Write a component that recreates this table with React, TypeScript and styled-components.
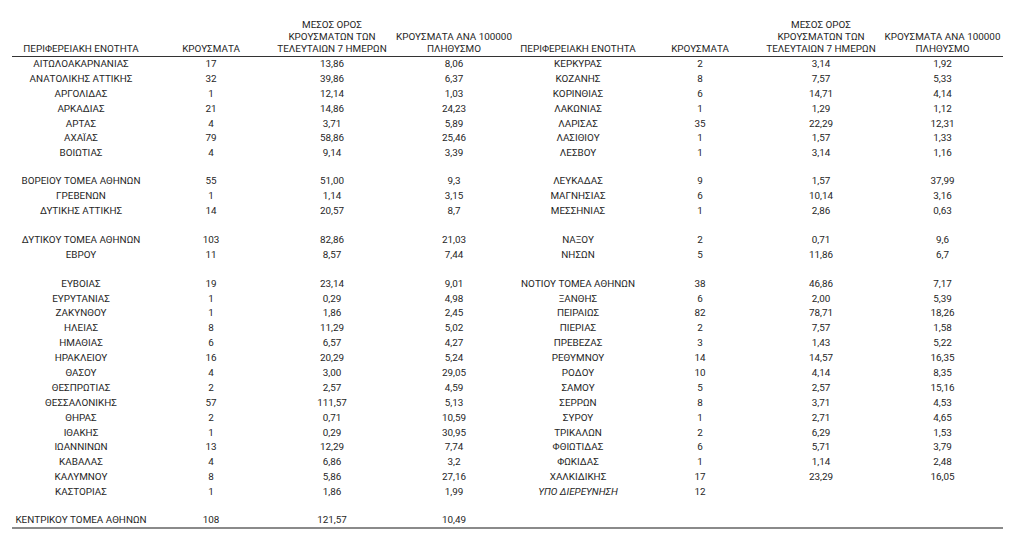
import React from "react";
import styled, { createGlobalStyle } from "styled-components";

const GlobalStyle = createGlobalStyle`
  html, body {
    margin: 0;
    padding: 0;
    background: #ffffff;
  }
  body {
    font-family: Roboto, "Noto Sans", "DejaVu Sans", sans-serif;
    color: #262626;
  }
`;

const Page = styled.div`
  width: 1024px;
  height: 534px;
  padding: 19px 0 0 12px;
  box-sizing: border-box;
  overflow: hidden;
`;

const Sheet = styled.table`
  width: 991px;
  table-layout: fixed;
  border-collapse: collapse;
  border-spacing: 0;
  font-size: 9.9px;
  color: #262626;
`;

const HeadCell = styled.th`
  font-weight: 400;
  text-align: center;
  vertical-align: bottom;
  line-height: 12px;
  padding: 0 0 1px 0;
  white-space: nowrap;
  border-bottom: 1.5px solid #333333;
`;

const Row = styled.tr<{ $blank?: "normal" | "short"; $last?: boolean }>`
  height: ${(p) =>
    p.$blank === "short" ? "13px" : p.$blank === "normal" ? "14px" : "14.9px"};
  ${(p) => (p.$last ? "border-bottom: 2.5px solid #8a8a8a;" : "")}
`;

const Cell = styled.td<{ $italic?: boolean }>`
  text-align: center;
  vertical-align: middle;
  padding: 0;
  line-height: 14px;
  white-space: nowrap;
  font-style: ${(p) => (p.$italic ? "italic" : "normal")};
`;

type Entry = [string, string, string, string];
type Line = { left?: Entry; right?: Entry; rightItalic?: boolean } | "gap" | "gapShort";

const lines: Line[] = [
  { left: ["ΑΙΤΩΛΟΑΚΑΡΝΑΝΙΑΣ", "17", "13,86", "8,06"], right: ["ΚΕΡΚΥΡΑΣ", "2", "3,14", "1,92"] },
  { left: ["ΑΝΑΤΟΛΙΚΗΣ ΑΤΤΙΚΗΣ", "32", "39,86", "6,37"], right: ["ΚΟΖΑΝΗΣ", "8", "7,57", "5,33"] },
  { left: ["ΑΡΓΟΛΙΔΑΣ", "1", "12,14", "1,03"], right: ["ΚΟΡΙΝΘΙΑΣ", "6", "14,71", "4,14"] },
  { left: ["ΑΡΚΑΔΙΑΣ", "21", "14,86", "24,23"], right: ["ΛΑΚΩΝΙΑΣ", "1", "1,29", "1,12"] },
  { left: ["ΑΡΤΑΣ", "4", "3,71", "5,89"], right: ["ΛΑΡΙΣΑΣ", "35", "22,29", "12,31"] },
  { left: ["ΑΧΑΪΑΣ", "79", "58,86", "25,46"], right: ["ΛΑΣΙΘΙΟΥ", "1", "1,57", "1,33"] },
  { left: ["ΒΟΙΩΤΙΑΣ", "4", "9,14", "3,39"], right: ["ΛΕΣΒΟΥ", "1", "3,14", "1,16"] },
  "gapShort",
  { left: ["ΒΟΡΕΙΟΥ ΤΟΜΕΑ ΑΘΗΝΩΝ", "55", "51,00", "9,3"], right: ["ΛΕΥΚΑΔΑΣ", "9", "1,57", "37,99"] },
  { left: ["ΓΡΕΒΕΝΩΝ", "1", "1,14", "3,15"], right: ["ΜΑΓΝΗΣΙΑΣ", "6", "10,14", "3,16"] },
  { left: ["ΔΥΤΙΚΗΣ ΑΤΤΙΚΗΣ", "14", "20,57", "8,7"], right: ["ΜΕΣΣΗΝΙΑΣ", "1", "2,86", "0,63"] },
  "gap",
  { left: ["ΔΥΤΙΚΟΥ ΤΟΜΕΑ ΑΘΗΝΩΝ", "103", "82,86", "21,03"], right: ["ΝΑΞΟΥ", "2", "0,71", "9,6"] },
  { left: ["ΕΒΡΟΥ", "11", "8,57", "7,44"], right: ["ΝΗΣΩΝ", "5", "11,86", "6,7"] },
  "gap",
  { left: ["ΕΥΒΟΙΑΣ", "19", "23,14", "9,01"], right: ["ΝΟΤΙΟΥ ΤΟΜΕΑ ΑΘΗΝΩΝ", "38", "46,86", "7,17"] },
  { left: ["ΕΥΡΥΤΑΝΙΑΣ", "1", "0,29", "4,98"], right: ["ΞΑΝΘΗΣ", "6", "2,00", "5,39"] },
  { left: ["ΖΑΚΥΝΘΟΥ", "1", "1,86", "2,45"], right: ["ΠΕΙΡΑΙΩΣ", "82", "78,71", "18,26"] },
  { left: ["ΗΛΕΙΑΣ", "8", "11,29", "5,02"], right: ["ΠΙΕΡΙΑΣ", "2", "7,57", "1,58"] },
  { left: ["ΗΜΑΘΙΑΣ", "6", "6,57", "4,27"], right: ["ΠΡΕΒΕΖΑΣ", "3", "1,43", "5,22"] },
  { left: ["ΗΡΑΚΛΕΙΟΥ", "16", "20,29", "5,24"], right: ["ΡΕΘΥΜΝΟΥ", "14", "14,57", "16,35"] },
  { left: ["ΘΑΣΟΥ", "4", "3,00", "29,05"], right: ["ΡΟΔΟΥ", "10", "4,14", "8,35"] },
  { left: ["ΘΕΣΠΡΩΤΙΑΣ", "2", "2,57", "4,59"], right: ["ΣΑΜΟΥ", "5", "2,57", "15,16"] },
  { left: ["ΘΕΣΣΑΛΟΝΙΚΗΣ", "57", "111,57", "5,13"], right: ["ΣΕΡΡΩΝ", "8", "3,71", "4,53"] },
  { left: ["ΘΗΡΑΣ", "2", "0,71", "10,59"], right: ["ΣΥΡΟΥ", "1", "2,71", "4,65"] },
  { left: ["ΙΘΑΚΗΣ", "1", "0,29", "30,95"], right: ["ΤΡΙΚΑΛΩΝ", "2", "6,29", "1,53"] },
  { left: ["ΙΩΑΝΝΙΝΩΝ", "13", "12,29", "7,74"], right: ["ΦΘΙΩΤΙΔΑΣ", "6", "5,71", "3,79"] },
  { left: ["ΚΑΒΑΛΑΣ", "4", "6,86", "3,2"], right: ["ΦΩΚΙΔΑΣ", "1", "1,14", "2,48"] },
  { left: ["ΚΑΛΥΜΝΟΥ", "8", "5,86", "27,16"], right: ["ΧΑΛΚΙΔΙΚΗΣ", "17", "23,29", "16,05"] },
  { left: ["ΚΑΣΤΟΡΙΑΣ", "1", "1,86", "1,99"], right: ["ΥΠΟ ΔΙΕΡΕΥΝΗΣΗ", "12", "", ""], rightItalic: true },
  "gapShort",
  { left: ["ΚΕΝΤΡΙΚΟΥ ΤΟΜΕΑ ΑΘΗΝΩΝ", "108", "121,57", "10,49"] },
];

const colWidths = [138, 122, 120, 124, 124, 120, 122, 121];

const Header = () => (
  <>
    <HeadCell>ΠΕΡΙΦΕΡΕΙΑΚΗ ΕΝΟΤΗΤΑ</HeadCell>
    <HeadCell>ΚΡΟΥΣΜΑΤΑ</HeadCell>
    <HeadCell>
      ΜΕΣΟΣ ΟΡΟΣ
      <br />
      ΚΡΟΥΣΜΑΤΩΝ ΤΩΝ
      <br />
      ΤΕΛΕΥΤΑΙΩΝ 7 ΗΜΕΡΩΝ
    </HeadCell>
    <HeadCell>
      ΚΡΟΥΣΜΑΤΑ ΑΝΑ 100000
      <br />
      ΠΛΗΘΥΣΜΟ
    </HeadCell>
  </>
);

const Half = ({ entry, italic }: { entry?: Entry; italic?: boolean }) => {
  const e = entry ?? ["", "", "", ""];
  return (
    <>
      <Cell $italic={italic}>{e[0]}</Cell>
      <Cell>{e[1]}</Cell>
      <Cell>{e[2]}</Cell>
      <Cell>{e[3]}</Cell>
    </>
  );
};

export default function App() {
  return (
    <>
      <GlobalStyle />
      <Page>
        <Sheet>
          <colgroup>
            {colWidths.map((w, i) => (
              <col key={i} style={{ width: w }} />
            ))}
          </colgroup>
          <thead>
            <tr>
              <Header />
              <Header />
            </tr>
          </thead>
          <tbody>
            {lines.map((line, i) =>
              typeof line === "string" ? (
                <Row key={i} $blank={line === "gap" ? "normal" : "short"}>
                  <Half />
                  <Half />
                </Row>
              ) : (
                <Row key={i} $last={i === lines.length - 1}>
                  <Half entry={line.left} />
                  <Half entry={line.right} italic={line.rightItalic} />
                </Row>
              )
            )}
          </tbody>
        </Sheet>
      </Page>
    </>
  );
}
